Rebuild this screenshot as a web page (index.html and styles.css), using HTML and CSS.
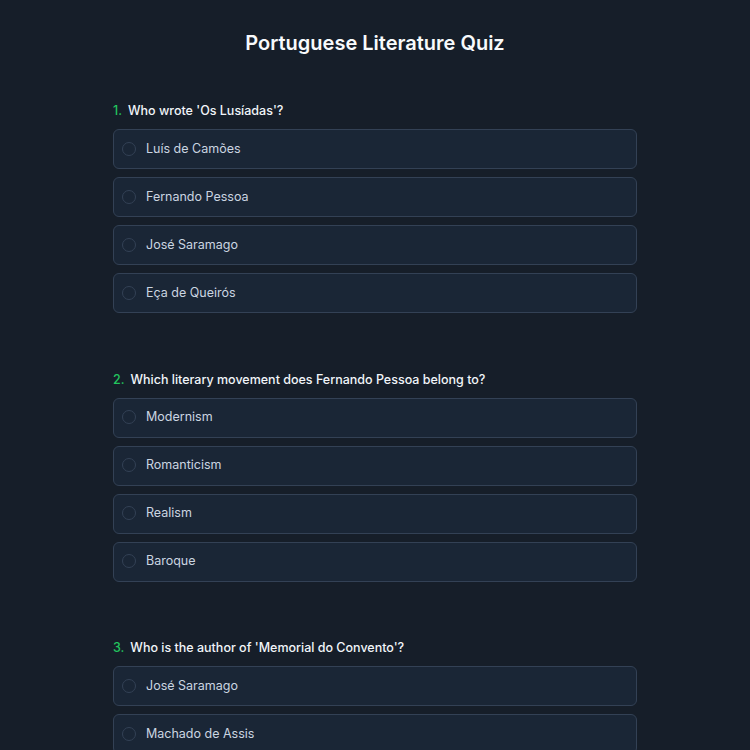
FILE: index.html
```html
<!DOCTYPE html>
<html lang="en">
<head>
<meta charset="utf-8">
<title>Portuguese Literature Quiz</title>
<link rel="stylesheet" href="styles.css">
</head>
<body>
<main class="quiz">
  <h1 class="quiz-title">Portuguese Literature Quiz</h1>

  <section class="question">
    <h2 class="question-label"><span class="question-num">1.</span>Who wrote 'Os Lusíadas'?</h2>
    <div class="options">
      <label class="option"><span class="radio"></span><span class="option-text">Luís de Camões</span></label>
      <label class="option"><span class="radio"></span><span class="option-text">Fernando Pessoa</span></label>
      <label class="option"><span class="radio"></span><span class="option-text">José Saramago</span></label>
      <label class="option"><span class="radio"></span><span class="option-text">Eça de Queirós</span></label>
    </div>
  </section>

  <section class="question">
    <h2 class="question-label"><span class="question-num">2.</span>Which literary movement does Fernando Pessoa belong to?</h2>
    <div class="options">
      <label class="option"><span class="radio"></span><span class="option-text">Modernism</span></label>
      <label class="option"><span class="radio"></span><span class="option-text">Romanticism</span></label>
      <label class="option"><span class="radio"></span><span class="option-text">Realism</span></label>
      <label class="option"><span class="radio"></span><span class="option-text">Baroque</span></label>
    </div>
  </section>

  <section class="question">
    <h2 class="question-label"><span class="question-num">3.</span>Who is the author of 'Memorial do Convento'?</h2>
    <div class="options">
      <label class="option"><span class="radio"></span><span class="option-text">José Saramago</span></label>
      <label class="option"><span class="radio"></span><span class="option-text">Machado de Assis</span></label>
      <label class="option"><span class="radio"></span><span class="option-text">Luís de Camões</span></label>
      <label class="option"><span class="radio"></span><span class="option-text">Fernando Pessoa</span></label>
    </div>
  </section>
</main>
</body>
</html>
```

FILE: styles.css
```css
* { box-sizing: border-box; }

html, body {
  margin: 0;
  background: #161e29;
}

body {
  font-family: Inter, "Noto Sans", "Liberation Sans", sans-serif;
  color: #e2e8f0;
}

.quiz {
  width: 524px;
  margin: 0 auto;
  padding-top: 29px;
}

.quiz-title {
  margin: 0 0 43px;
  font-size: 20px;
  line-height: 28px;
  font-weight: 600;
  text-align: center;
  color: #f8fafc;
}

.question {
  margin-bottom: 55.5px;
}

.question-label {
  margin: 0 0 8px;
  padding-top: 1px;
  font-size: 12.5px;
  line-height: 20px;
  font-weight: 500;
  color: #f1f5f9;
}

.question-num {
  color: #22c55e;
  margin-right: 6px;
}

.options {
  display: flex;
  flex-direction: column;
  gap: 8px;
}

.option {
  display: flex;
  align-items: center;
  gap: 10px;
  height: 40px;
  padding: 0 8px 1px;
  background: #1a2636;
  border: 1px solid #334155;
  border-radius: 6px;
}

.radio {
  width: 14px;
  height: 14px;
  border: 1px solid #334155;
  border-radius: 50%;
  flex: none;
}

.option-text {
  font-size: 12.5px;
  line-height: 20px;
  color: #cbd5e1;
}
```
